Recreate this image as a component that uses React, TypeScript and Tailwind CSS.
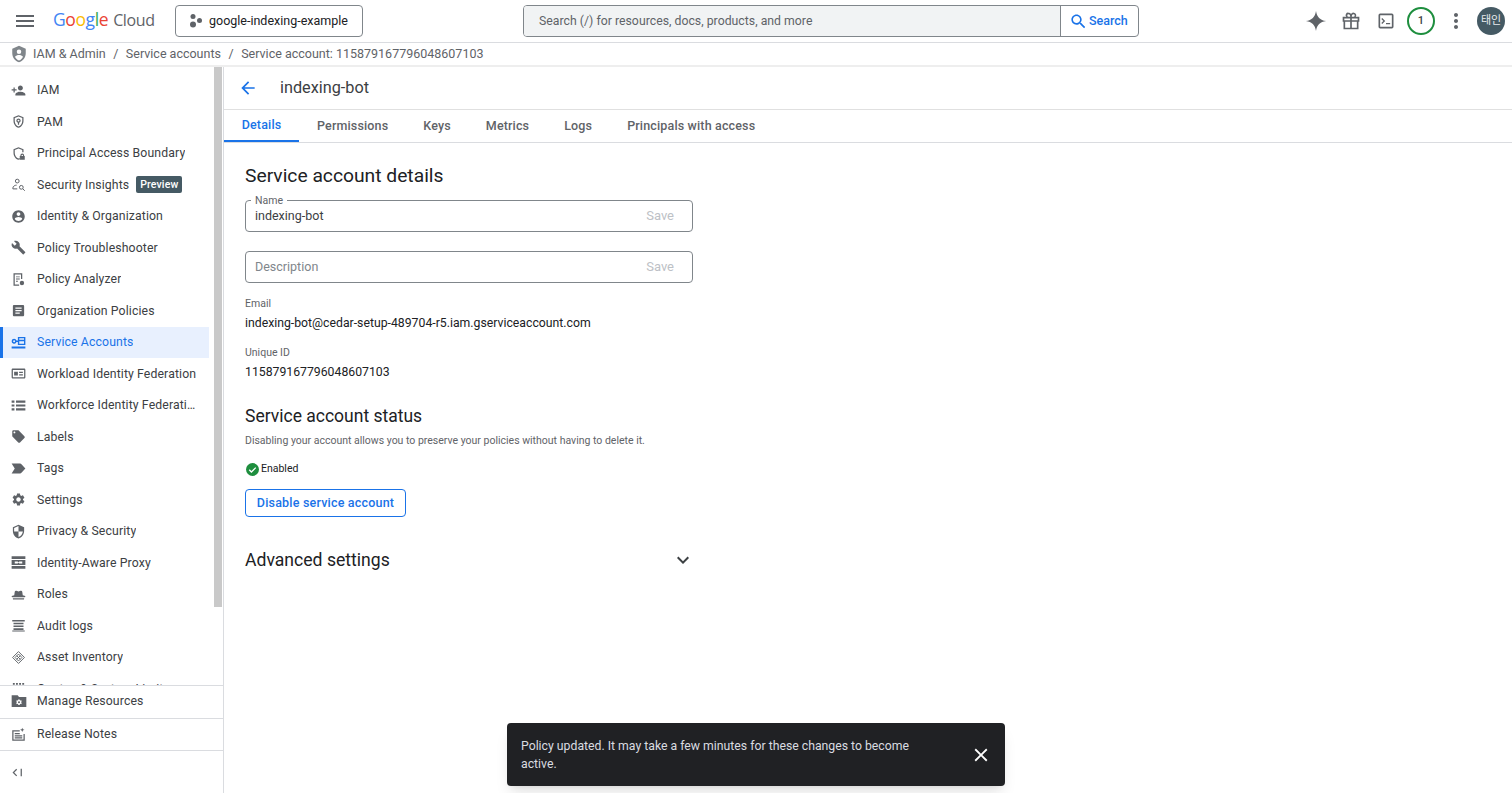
import type { ReactNode } from "react";

const icons: Record<string, ReactNode> = {
  menu: <path d="M3 18h18v-2H3v2zm0-5h18v-2H3v2zm0-7v2h18V6H3z" />,
  personAdd: <path d="M15 12c2.210 0 4-1.790 4-4s-1.790-4-4-4-4 1.790-4 4 1.790 4 4 4zm-9-2V7H4v3H1v2h3v3h2v-3h3v-2H6zm9 4c-2.670 0-8 1.340-8 4v2h16v-2c0-2.660-5.330-4-8-4z" />,
  pam: <path fillRule="evenodd" d="M12 2 4 5v6c0 5 3.400 9.700 8 11 4.600-1.300 8-6 8-11V5l-8-3zm0 2.100 6 2.200V11c0 4-2.600 7.800-6 9-3.400-1.200-6-5-6-9V6.300l6-2.200zM12 7a3.500 3.500 0 0 0-1 6.850V17h2v-3.150A3.500 3.500 0 0 0 12 7zm0 2a1.500 1.500 0 1 1 0 3 1.500 1.500 0 0 1 0-3z" />,
  pab: <path fillRule="evenodd" d="M12 2 4 5v6c0 5 3.400 9.700 8 11 .9-.25 1.700-.65 2.500-1.150V18.500c-.8.700-1.600 1.200-2.500 1.500-3.400-1.200-6-5-6-9V6.300l6-2.200 6 2.200V10h2V5l-8-3zm6 10a3 3 0 0 0-3 3v1h-1v6h8v-6h-1v-1a3 3 0 0 0-3-3zm0 1.800c.7 0 1.200.5 1.200 1.200v1h-2.400v-1c0-.7.5-1.200 1.200-1.200z" />,
  insights: (
    <g fill="none" stroke="currentColor" strokeWidth="1.600">
      <circle cx="10" cy="6.500" r="3" />
      <path d="M3 19v-1.500c0-2.800 3.500-4.500 6-4.500M3 19h7" />
      <circle cx="16.500" cy="16.500" r="3" />
      <path d="m19 19 3 3" />
    </g>
  ),
  account: <path d="M12 2C6.480 2 2 6.480 2 12s4.480 10 10 10 10-4.480 10-10S17.520 2 12 2zm0 3c1.660 0 3 1.340 3 3s-1.340 3-3 3-3-1.340-3-3 1.340-3 3-3zm0 14.200c-2.500 0-4.710-1.280-6-3.220.030-1.990 4-3.080 6-3.080 1.990 0 5.970 1.090 6 3.080-1.290 1.940-3.500 3.220-6 3.220z" />,
  build: <path d="M22.700 19l-9.100-9.100c.9-2.300.4-5-1.500-6.900-2-2-5-2.400-7.400-1.300L9 6 6 9 1.600 4.700C.4 7.100.9 10.100 2.900 12.100c1.900 1.900 4.600 2.400 6.900 1.500l9.100 9.100c.4.4 1 .4 1.400 0l2.300-2.300c.5-.4.5-1.100.1-1.400z" />,
  analyzer: (
    <g>
      <path fillRule="evenodd" d="M4 2h14v9h-2V4H6v16h7v2H4V2z" />
      <path d="M8 7h6v1.500H8zM8 10.500h6V12H8zM8 14h3v1.500H8z" />
      <circle cx="17.500" cy="17.500" r="3.500" />
    </g>
  ),
  article: <path d="M19 3H5c-1.100 0-2 .9-2 2v14c0 1.100.9 2 2 2h14c1.100 0 2-.9 2-2V5c0-1.100-.9-2-2-2zm-5 14H7v-2h7v2zm3-4H7v-2h10v2zm0-4H7V7h10v2z" />,
  serviceAccount: <path fillRule="evenodd" d="M1 18.500h22V21.500H1v-2.500zM5 6a4 4 0 0 1 3.800 2.800H11V3h12v13H11V11.200H8.800A4 4 0 1 1 5 6zm0 2.400a1.600 1.600 0 1 0 0 3.200 1.600 1.600 0 0 0 0-3.200zM13.200 5.200v2.300h7.600V5.200h-7.600zm0 4.600v4h7.600v-4h-7.600z" />,
  workload: <path fillRule="evenodd" d="M3 4h18c1.100 0 2 .9 2 2v12c0 1.100-.9 2-2 2H3c-1.100 0-2-.9-2-2V6c0-1.100.9-2 2-2zm0 2.200v11.600h18V6.200H3zM5 9h6v6H5V9zm8 0h6v2h-6V9zm0 4h6v2h-6v-2z" />,
  list: <path d="M1 4h4.500v3.500H1zM8 4h15v3.500H8zM1 10.250h4.500v3.500H1zM8 10.250h15v3.500H8zM1 16.500h4.500V20H1zM8 16.500h15V20H8z" />,
  tag: <path d="M21.410 11.580l-9-9C12.050 2.220 11.550 2 11 2H4c-1.100 0-2 .9-2 2v7c0 .55.22 1.050.59 1.420l9 9c.36.36.86.58 1.410.58.55 0 1.050-.22 1.410-.59l7-7c.37-.36.59-.86.59-1.410 0-.55-.23-1.060-.59-1.420zM5.500 7C4.670 7 4 6.330 4 5.500S4.670 4 5.500 4 7 4.670 7 5.500 6.330 7 5.500 7z" />,
  label: <path d="M14.500 4H1l5 8-5 8h13.500c.9 0 1.700-.4 2.200-1.100L23 12l-6.300-6.900c-.5-.7-1.300-1.100-2.200-1.100z" />,
  settings: <path d="M19.140 12.940c.04-.3.06-.61.06-.94 0-.32-.02-.64-.07-.94l2.030-1.580c.18-.14.23-.41.12-.61l-1.920-3.320c-.12-.22-.37-.29-.59-.22l-2.390.96c-.5-.38-1.030-.7-1.620-.94l-.36-2.540c-.04-.24-.24-.41-.48-.41h-3.840c-.24 0-.43.17-.47.41l-.36 2.540c-.59.24-1.130.57-1.620.94l-2.390-.96c-.22-.08-.47 0-.59.22L2.740 8.870c-.12.21-.08.47.12.61l2.030 1.580c-.05.3-.09.63-.09.94s.02.64.07.94l-2.030 1.580c-.18.14-.23.41-.12.61l1.920 3.320c.12.22.37.29.59.22l2.390-.96c.5.38 1.030.7 1.620.94l.36 2.540c.05.24.24.41.48.41h3.840c.24 0 .44-.17.47-.41l.36-2.540c.59-.24 1.130-.56 1.620-.94l2.390.96c.22.08.47 0 .59-.22l1.920-3.320c.12-.22.07-.47-.12-.61l-2.010-1.580zM12 15.600c-1.980 0-3.600-1.620-3.600-3.600s1.620-3.600 3.600-3.600 3.600 1.620 3.600 3.600-1.620 3.600-3.600 3.600z" />,
  security: <path d="M12 1L3 5v6c0 5.550 3.840 10.740 9 12 5.160-1.260 9-6.450 9-12V5l-9-4zm0 10.990h7c-.53 4.120-3.280 7.790-7 8.940V12H5V6.300l7-3.110v8.800z" />,
  proxy: <path fillRule="evenodd" d="M1 2h22v4.500H1V2zm0 15.500h22V22H1v-4.500zM1 8h22v8H1V8zm5 2.500v3h5v-.9h2v.9h5v-3h-5v.9h-2v-.9H6z" />,
  roles: <path d="M6 7.500C6.300 6 7.500 5.500 8.800 6l3.200 1 3.200-1c1.300-.5 2.500 0 2.800 1.500l.8 5.500c1.800.3 4.200 1 4.200 2 0 .5-.6.900-1.500 1.200H2.500C1.600 15.900 1 15.500 1 15c0-1 2.400-1.700 4.200-2L6 7.500zM3 18h18v1c0 .6-.4 1-1 1H4c-.6 0-1-.4-1-1v-1z" />,
  logs: <path d="M2 3h20v2.500H2zM4 7.500h16V10H4zM4 12h16v2.500H4zM4 16.500h16V19H4zM2 20h20v1.500H2z" />,
  asset: (
    <g fill="none" stroke="currentColor" strokeWidth="1.500">
      <path d="M12 2.500 21.500 12 12 21.500 2.500 12 12 2.500z" />
      <path d="M12 6.500 17.500 12 12 17.500 6.500 12 12 6.500z" />
      <path d="m9 9 6 6M15 9l-6 6" />
    </g>
  ),
  quota: <path d="M3 3h3v3H3zM8 3h3v3H8zM13 3h3v3h-3zM18 3h3v3h-3zM3 8h18v13H3z" />,
  manage: <path fillRule="evenodd" d="M1 3.500h9l2 2.500h11v15H1V3.500zm11 6-1 .1-.3 1.200-.8.5-1.200-.4-.9 1.600.9.8v1l-.9.8.9 1.600 1.200-.4.8.5.3 1.200h2l.3-1.200.8-.5 1.200.4.9-1.600-.9-.8v-1l.9-.8-.9-1.600-1.200.4-.8-.5-.3-1.200h-1zm0 2.700a1.500 1.500 0 1 1 0 3 1.500 1.500 0 0 1 0-3z" />,
  notes: <path fillRule="evenodd" d="M2 5h12v2H4v13h16v-9h2v11H2V5zm4 4.500h8v2H6v-2zm0 3.500h12v2H6v-2zm0 3.500h12v2H6v-2zM18 1l1 2.500 2.500 1-2.500 1-1 2.500-1-2.500-2.500-1 2.500-1L18 1z" />,
  collapse: <path d="M11.400 7.400 10 6 4 12l6 6 1.400-1.400L6.800 12l4.600-4.600zM17 6h2v12h-2z" />,
  search: <path d="M15.500 14h-.79l-.28-.27C15.410 12.590 16 11.110 16 9.500 16 5.910 13.090 3 9.500 3S3 5.910 3 9.500 5.910 16 9.500 16c1.610 0 3.090-.59 4.230-1.570l.27.28v.79l5 4.990L20.490 19l-4.990-5zm-6 0C7.010 14 5 11.990 5 9.500S7.010 5 9.500 5 14 7.010 14 9.500 11.990 14 9.500 14z" />,
  spark: <path d="M12 1c.9 6.500 4.500 10.100 11 11-6.500.9-10.100 4.500-11 11-.9-6.500-4.500-10.100-11-11 6.500-.9 10.100-4.500 11-11z" />,
  gift: <path fillRule="evenodd" d="M9 2a3 3 0 0 1 3 1.700A3 3 0 0 1 17.700 7H22v6h-1v9H3v-9H2V7h4.300A3 3 0 0 1 9 2zm0 2a1 1 0 0 0 0 2.900h2V6a2 2 0 0 0-2-2zm6 0a2 2 0 0 0-2 2v.9h2A1 1 0 0 0 15 4zM4 9v2h7V9H4zm9 0v2h7V9h-7zM5 13v7h6v-7H5zm8 0v7h6v-7h-6z" />,
  terminal: <path fillRule="evenodd" d="M5 3h14a2 2 0 0 1 2 2v14a2 2 0 0 1-2 2H5a2 2 0 0 1-2-2V5a2 2 0 0 1 2-2zm0 2v14h14V5H5zm2.500 3.500L11 12l-3.500 3.500L6.400 14.400 8.800 12 6.400 9.600l1.100-1.100zM12 14.500h5V16h-5v-1.500z" />,
  more: <path d="M12 8c1.100 0 2-.9 2-2s-.9-2-2-2-2 .9-2 2 .9 2 2 2zm0 2c-1.100 0-2 .9-2 2s.9 2 2 2 2-.9 2-2-.9-2-2-2zm0 6c-1.100 0-2 .9-2 2s.9 2 2 2 2-.9 2-2-.9-2-2-2z" />,
  back: <path d="M20 11H7.830l5.590-5.590L12 4l-8 8 8 8 1.410-1.410L7.830 13H20v-2z" />,
  close: <path d="M19 6.410L17.590 5 12 10.590 6.410 5 5 6.410 10.590 12 5 17.590 6.410 19 12 13.410 17.590 19 19 17.590 13.410 12z" />,
  expand: <path d="M16.590 8.590L12 13.170 7.410 8.590 6 10l6 6 6-6z" />,
  shieldUser: <path fillRule="evenodd" d="M12 1 3 5v6c0 5.550 3.840 10.740 9 12 5.160-1.260 9-6.450 9-12V5l-9-4zm0 5a3 3 0 1 1 0 6 3 3 0 0 1 0-6zm0 14.500c-2.400-.8-4.300-2.700-5.300-5 1-1.500 3.400-2.300 5.300-2.300s4.300.8 5.300 2.300c-1 2.300-2.900 4.200-5.300 5z" />,
};

function Icon({ name, className }: { name: string; className?: string }) {
  return (
    <svg viewBox="0 0 24 24" fill="currentColor" className={className}>
      {icons[name]}
    </svg>
  );
}

const navItems = [
  { icon: "personAdd", label: "IAM" },
  { icon: "pam", label: "PAM" },
  { icon: "pab", label: "Principal Access Boundary" },
  { icon: "insights", label: "Security Insights", badge: "Preview" },
  { icon: "account", label: "Identity & Organization" },
  { icon: "build", label: "Policy Troubleshooter" },
  { icon: "analyzer", label: "Policy Analyzer" },
  { icon: "article", label: "Organization Policies" },
  { icon: "serviceAccount", label: "Service Accounts", active: true },
  { icon: "workload", label: "Workload Identity Federation" },
  { icon: "list", label: "Workforce Identity Federation" },
  { icon: "tag", label: "Labels" },
  { icon: "label", label: "Tags" },
  { icon: "settings", label: "Settings" },
  { icon: "security", label: "Privacy & Security" },
  { icon: "proxy", label: "Identity-Aware Proxy" },
  { icon: "roles", label: "Roles" },
  { icon: "logs", label: "Audit logs" },
  { icon: "asset", label: "Asset Inventory" },
  { icon: "quota", label: "Quotas & System Limits" },
];

const tabs = ["Details", "Permissions", "Keys", "Metrics", "Logs", "Principals with access"];

function TopBar() {
  return (
    <header className="flex h-[43px] shrink-0 items-center border-b border-[#dadce0] bg-white">
      <Icon name="menu" className="ml-[13px] h-6 w-6 text-[#5f6368]" />
      <div className="ml-[16px] flex w-[122px] items-baseline pb-[4px] text-[17.5px] tracking-[-0.4px] font-['Open_Sans',sans-serif]">
        <span className="text-[#4285f4]">G</span>
        <span className="text-[#ea4335]">o</span>
        <span className="text-[#fbbc04]">o</span>
        <span className="text-[#4285f4]">g</span>
        <span className="text-[#34a853]">l</span>
        <span className="text-[#ea4335]">e</span>
        <span className="ml-[5px] text-[16px] text-[#5f6368]">Cloud</span>
      </div>
      <button className="flex h-[32px] w-[188px] items-center rounded-[4px] border border-[#80868b] pl-[12px] text-[12.5px] whitespace-nowrap text-[#202124]">
        <svg viewBox="0 0 16 16" fill="#5f6368" className="h-4 w-4 shrink-0">
          <circle cx="5" cy="3.500" r="2.500" />
          <circle cx="5" cy="11.500" r="3" />
          <circle cx="11.500" cy="7.500" r="2.500" />
        </svg>
        <span className="ml-[5px]">google-indexing-example</span>
      </button>
      <div className="ml-[160px] flex h-[32px] w-[616px] overflow-hidden rounded-[4px] border border-[#80868b]">
        <div className="flex flex-1 items-center bg-[#f1f3f4] pl-[15px] text-[12.25px] tracking-[0.02px] text-[#5f6368]">
          Search (/) for resources, docs, products, and more
        </div>
        <div className="flex w-[78px] items-center border-l border-[#80868b] pl-[8px] text-[12.5px] font-medium text-[#1a73e8]">
          <Icon name="search" className="h-[19px] w-[19px]" />
          <span className="ml-[1px]">Search</span>
        </div>
      </div>
      <div className="flex flex-1 items-center">
        <Icon name="spark" className="ml-[166px] h-[22px] w-[22px] text-[#5f6368]" />
        <Icon name="gift" className="ml-[14px] h-[20px] w-[20px] text-[#5f6368]" />
        <Icon name="terminal" className="ml-[15px] h-[20px] w-[20px] text-[#5f6368]" />
        <div className="ml-[11px] flex h-[28px] w-[28px] items-center justify-center rounded-full border-2 border-[#1e8e3e] text-[11px] font-medium text-[#3c4043]">
          1
        </div>
        <Icon name="more" className="ml-[9px] h-[24px] w-[24px] text-[#5f6368]" />
        <div className="ml-[9px] flex h-[28px] w-[28px] items-center justify-center rounded-full bg-[#455a64] text-[11px] whitespace-nowrap text-[#e8eaed] font-['Roboto','Noto_Sans_CJK_KR',sans-serif]">
          태인
        </div>
      </div>
    </header>
  );
}

function Breadcrumb() {
  return (
    <div className="flex h-[24px] shrink-0 items-center border-b-2 border-[#eeeeee] pl-[10px] text-[12.5px] text-[#5f6368]">
      <Icon name="shieldUser" className="h-[18px] w-[18px] text-[#80868b]" />
      <span className="ml-[5px]">IAM &amp; Admin</span>
      <span className="mx-[7.500px]">/</span>
      <span>Service accounts</span>
      <span className="mx-[7.500px]">/</span>
      <span>Service account: 115879167796048607103</span>
    </div>
  );
}

function NavRow({ item }: { item: (typeof navItems)[number] }) {
  return (
    <div
      className={`flex h-[31.5px] w-[209px] shrink-0 items-center text-[12.25px] tracking-[0.12px] ${
        item.active
          ? "border-l-[3px] border-[#1a73e8] bg-[#e8f0fe] pl-[8px] text-[#1a73e8]"
          : "pl-[11px] text-[#3c4043]"
      }`}
    >
      <Icon
        name={item.icon}
        className={`h-[15px] w-[15px] shrink-0 ${item.active ? "text-[#1a73e8]" : "text-[#5f6368]"}`}
      />
      <span className="ml-[11px] max-w-[159.500px] truncate">{item.label}</span>
      {item.badge && (
        <span className="ml-[7px] flex h-[17px] w-[46px] items-center justify-center rounded-[2px] bg-[#455a64] text-[10.5px] font-medium text-white">
          {item.badge}
        </span>
      )}
    </div>
  );
}

function Sidebar() {
  return (
    <aside className="flex w-[224px] shrink-0 flex-col border-r border-[#dadce0] bg-white">
      <div className="flex h-[618px] overflow-hidden">
        <nav className="flex w-[214px] shrink-0 flex-col pt-[7.500px]">
          {navItems.map((item) => (
            <NavRow key={item.label} item={item} />
          ))}
        </nav>
        <div className="h-[540px] w-[8px] bg-[#c9c9c9]" />
      </div>
      <div className="flex h-[33px] shrink-0 items-center border-t border-[#dadce0] pb-[2px] pl-[11px] text-[12.25px] tracking-[0.12px] text-[#3c4043]">
        <Icon name="manage" className="h-[16px] w-[16px] text-[#5f6368]" />
        <span className="ml-[10px]">Manage Resources</span>
      </div>
      <div className="flex h-[32px] shrink-0 items-center border-t border-[#dadce0] pl-[11px] text-[12.25px] tracking-[0.12px] text-[#3c4043]">
        <Icon name="notes" className="h-[15px] w-[15px] text-[#5f6368]" />
        <span className="ml-[11px]">Release Notes</span>
      </div>
      <div className="flex h-[43px] shrink-0 items-center border-t border-[#dadce0] pl-[10px]">
        <Icon name="collapse" className="h-[15px] w-[15px] text-[#5f6368]" />
      </div>
    </aside>
  );
}

function TextField({ label, value, placeholder }: { label?: string; value?: string; placeholder?: string }) {
  return (
    <div className="relative flex h-[32px] w-[448px] items-center justify-between rounded-[4px] border border-[#80868b] px-[9px] text-[12.5px]">
      {label && (
        <span className="absolute top-[-7px] left-[5px] bg-white px-[4px] text-[10.5px] leading-[13px] text-[#5f6368]">
          {label}
        </span>
      )}
      <span className={value ? "text-[#3c4043]" : "text-[#80868b]"}>{value ?? placeholder}</span>
      <span className="pr-[9px] text-[13px] text-[#bdc1c6]">Save</span>
    </div>
  );
}

function Main() {
  return (
    <main className="relative flex-1 bg-white">
      <div className="flex h-[43px] items-center border-b border-[#e0e0e0] pl-[14px]">
        <Icon name="back" className="h-[20px] w-[20px] text-[#1a73e8]" />
        <h1 className="ml-[22px] pt-[1px] text-[16.250px] text-[#3c4043]">indexing-bot</h1>
      </div>
      <div className="flex h-[33px] items-stretch border-b border-[#dadce0] pt-[1px] text-[12.5px] font-medium tracking-[0.15px] text-[#5f6368]">
        {tabs.map((tab, i) => (
          <div
            key={tab}
            className={`flex items-center ${
              i === 0 ? "w-[75px] justify-center border-b-2 border-[#1a73e8] text-[#1a73e8]" : "ml-[18px] pr-[17px]"
            }`}
          >
            {tab}
          </div>
        ))}
      </div>
      <div className="ml-[21px] flex w-[448px] flex-col">
        <h2 className="mt-[20px] text-[19.250px] leading-[26px] text-[#202124]">Service account details</h2>
        <div className="mt-[11px]">
          <TextField label="Name" value="indexing-bot" />
        </div>
        <div className="mt-[19px]">
          <TextField placeholder="Description" />
        </div>
        <div className="mt-[14px] text-[10.5px] leading-[13px] text-[#5f6368]">Email</div>
        <div className="mt-[4px] text-[12.25px] leading-[18px] text-[#202124]">
          indexing-bot@cedar-setup-489704-r5.iam.gserviceaccount.com
        </div>
        <div className="mt-[14px] text-[10.5px] leading-[13px] text-[#5f6368]">Unique ID</div>
        <div className="mt-[4px] text-[12.25px] leading-[18px] text-[#202124]">115879167796048607103</div>
        <h2 className="mt-[23px] text-[17.5px] leading-[24px] text-[#202124]">Service account status</h2>
        <p className="mt-[6px] text-[10.5px] leading-[14px] text-[#5f6368]">
          Disabling your account allows you to preserve your policies without having to delete it.
        </p>
        <div className="mt-[14px] flex items-center text-[10.5px] leading-[14px] text-[#202124]">
          <svg viewBox="0 0 24 24" className="ml-[1px] h-[13px] w-[13px]">
            <circle cx="12" cy="12" r="12" fill="#1e8e3e" />
            <path d="m6 12.500 4 4 8-8" fill="none" stroke="white" strokeWidth="2.500" />
          </svg>
          <span className="ml-[2px]">Enabled</span>
        </div>
        <button className="mt-[13px] h-[28px] w-[161px] rounded-[4px] border border-[#1a73e8] text-[12.5px] font-medium tracking-[0.2px] text-[#1a73e8]">
          Disable service account
        </button>
        <div className="mt-[31px] flex items-center justify-between">
          <h2 className="text-[17.6px] leading-[24px] text-[#202124]">Advanced settings</h2>
          <Icon name="expand" className="mr-[-2px] h-[24px] w-[24px] text-[#3c4043]" />
        </div>
      </div>
      <div className="absolute top-[656px] left-[283px] flex h-[63px] w-[498px] items-center justify-between rounded-[4px] bg-[#202124] pr-[13px] pl-[14px] shadow-lg">
        <p className="w-[400px] text-[12.25px] leading-[18px] text-[#dadce0]">
          Policy updated. It may take a few minutes for these changes to become active.
        </p>
        <Icon name="close" className="h-[22px] w-[22px] text-white" />
      </div>
    </main>
  );
}

export default function App() {
  return (
    <div className="flex h-[793px] w-[1512px] flex-col overflow-hidden bg-white font-['Roboto',sans-serif]">
      <TopBar />
      <Breadcrumb />
      <div className="flex min-h-0 flex-1">
        <Sidebar />
        <Main />
      </div>
    </div>
  );
}
